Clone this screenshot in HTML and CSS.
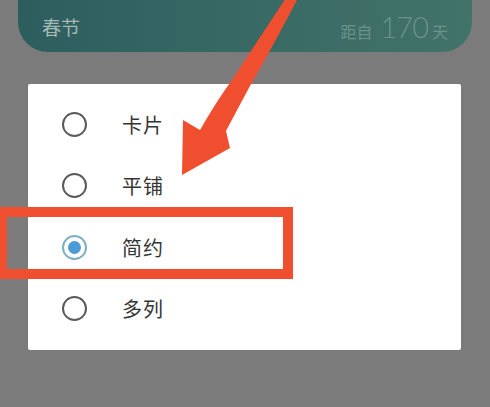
FILE: index.html
```html
<!DOCTYPE html>
<html lang="zh">
<head>
    <meta charset="UTF-8">
    <meta name="viewport" content="width=device-width, initial-scale=1.0">
    <title>列表样式</title>

    <link rel="stylesheet" href="styles.css">
</head>
<body>
    <div class="tarjeta">
        <span class="fiesta">春节</span>
        <span class="dias"><span class="peq">距自</span><span class="num">170</span><span class="peq">天</span></span>
    </div>

    <div class="dialogo">
        <div class="opcion">
            <span class="radio"></span><span class="texto">卡片</span>
        </div>
        <div class="opcion">
            <span class="radio"></span><span class="texto">平铺</span>
        </div>
        <div class="opcion">
            <span class="radio activo"></span><span class="texto">简约</span>
        </div>
        <div class="opcion">
            <span class="radio"></span><span class="texto">多列</span>
        </div>
    </div>

    <!-- marca roja encima de la opción -->
    <div class="marco"></div>

    <svg class="flecha" width="490" height="407" viewBox="0 0 490 407">
        <path d="M286 -2 L298 -2 Q272 48 250 86 Q238 108 226 131 L230 148 L182 175 L183 120 L200 130 Q216 102 232 80 Q258 40 286 -2 Z" fill="#f04f2f"/>
    </svg>
</body>
</html>
```

FILE: styles.css
```css
body {
    margin: 0;
    height: 407px;
    overflow: hidden;
    background-color: #7b7b7b;
    font-family: "Noto Sans CJK SC", "Noto Sans", sans-serif;
    position: relative;
}

.tarjeta {
    margin: -30px 18px 0 18px;
    height: 82px;
    padding: 30px 24px 0 24px;
    box-sizing: border-box;
    border-radius: 0 0 30px 30px;
    background: linear-gradient(90deg, #2d5e5e, #3b6b65 60%, #427369);
    display: flex;
    justify-content: space-between;
    align-items: center;
}

.fiesta {
    font-size: 19px;
    color: #a4b9b5;
}

.dias {
    display: flex;
    align-items: baseline;
    color: #68928a;
}

.peq {
    font-size: 16px;
}

.num {
    font-family: Lato, "Noto Sans", sans-serif;
    font-weight: 300;
    font-size: 29px;
    margin: 0 4px 0 8px;
    letter-spacing: -1px;
}

.dialogo {
    margin: 32px 0 0 28px;
    width: 433px;
    height: 266px;
    box-sizing: border-box;
    padding-top: 10px;
    background-color: #ffffff;
    border-radius: 2px;
}

.opcion {
    height: 61.3px;
    display: flex;
    align-items: center;
    padding-left: 34px;
}

.radio {
    width: 21px;
    height: 21px;
    border: 2px solid #5a5a5a;
    border-radius: 50%;
    box-sizing: content-box;
    display: flex;
    align-items: center;
    justify-content: center;
}

.radio.activo {
    border-color: #7eaec4;
}

.radio.activo::after {
    content: "";
    width: 13px;
    height: 13px;
    border-radius: 50%;
    background-color: #4b9cd6;
}

.texto {
    margin-left: 35px;
    font-size: 20px;
    color: #353535;
    letter-spacing: 1px;
}

.marco {
    position: absolute;
    left: -3px;
    top: 207px;
    width: 296px;
    height: 72px;
    box-sizing: border-box;
    border: 10px solid #f04f2f;
}

.flecha {
    position: absolute;
    left: 0;
    top: 0;
}
```
